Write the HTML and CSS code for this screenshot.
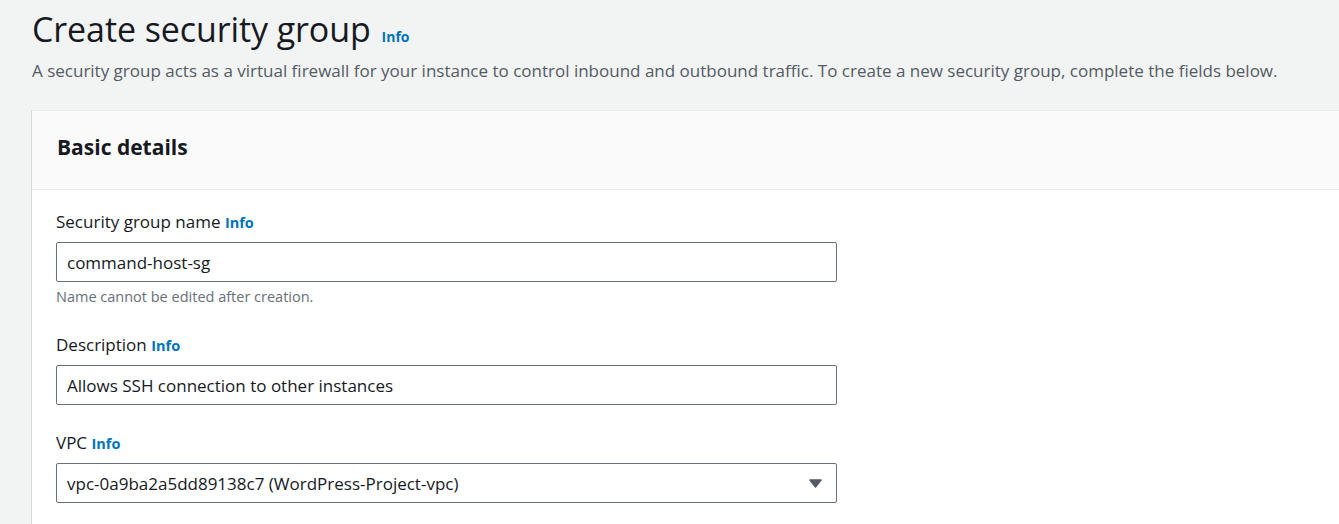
FILE: index.html
```html
<!DOCTYPE html>
<html>
<head>
<meta charset="utf-8">
<link rel="stylesheet" href="styles.css">
</head>
<body>
<div class="page">
  <header class="page-head">
    <h1 class="title">Create security group <a class="info info-title">Info</a></h1>
    <p class="subtitle">A security group acts as a virtual firewall for your instance to control inbound and outbound traffic. To create a new security group, complete the fields below.</p>
  </header>
  <section class="card">
    <div class="card-head"><h2>Basic details</h2></div>
    <div class="card-body">
      <div class="field">
        <label class="label">Security group name <a class="info">Info</a></label>
        <div class="input">command-host-sg</div>
        <div class="hint">Name cannot be edited after creation.</div>
      </div>
      <div class="field">
        <label class="label">Description <a class="info">Info</a></label>
        <div class="input">Allows SSH connection to other instances</div>
      </div>
      <div class="field">
        <label class="label">VPC <a class="info">Info</a></label>
        <div class="input select">
          <span>vpc-0a9ba2a5dd89138c7 (WordPress-Project-vpc)</span>
          <svg class="caret" width="13" height="9" viewBox="0 0 13 9"><path d="M1 1h11L6.5 8z" fill="#545b64" stroke="#545b64" stroke-width="1.5" stroke-linejoin="round"/></svg>
        </div>
      </div>
    </div>
  </section>
</div>
</body>
</html>
```

FILE: styles.css
```css
html, body {
  margin: 0;
  padding: 0;
  background: #f2f3f3;
  font-family: "Open Sans", "Noto Sans", sans-serif;
  color: #16191f;
  overflow: hidden;
}
.page {
  padding: 0 0 0 31px;
}
.page-head {
  padding: 7px 0 0 1px;
}
.title {
  margin: 0;
  font-size: 34px;
  font-weight: 400;
  line-height: 44px;
  display: flex;
  align-items: baseline;
  letter-spacing: -0.1px;
}
.info {
  color: #0073bb;
  font-weight: 700;
  font-size: 14px;
  letter-spacing: 0;
}
.info-title {
  margin-left: 11px;
  font-size: 14px;
}
.subtitle {
  margin: 0;
  font-size: 17px;
  line-height: 24px;
  color: #545b64;
  white-space: nowrap;
}
.card {
  margin-top: 27px;
  min-height: 420px;
  background: #fff;
  border-left: 1px solid #d5dbdb;
  border-top: 1px solid #eaeded;
}
.card-head {
  background: #fafafa;
  border-bottom: 1px solid #eaeded;
  height: 79px;
  box-sizing: border-box;
  display: flex;
  align-items: center;
  padding: 0 0 7px 25px;
}
.card-head h2 {
  margin: 0;
  font-size: 21px;
  font-weight: 700;
  line-height: 28px;
}
.card-body {
  padding: 20px 0 0 24px;
  display: flex;
  flex-direction: column;
  gap: 26px;
}
.field {
  display: flex;
  flex-direction: column;
  width: 781px;
}
.label {
  font-size: 17px;
  line-height: 24px;
  margin-bottom: 7px;
  display: block;
}
.label .info {
  font-size: 14.5px;
}
.input {
  height: 38px;
  border: 1px solid #687078;
  border-radius: 2px;
  box-sizing: content-box;
  padding: 0 10px;
  display: flex;
  align-items: center;
  font-size: 17px;
  background: #fff;
}
.select {
  justify-content: space-between;
  padding-right: 14px;
}
.hint {
  margin-top: 5px;
  font-size: 14.5px;
  line-height: 20px;
  color: #687078;
}
```
